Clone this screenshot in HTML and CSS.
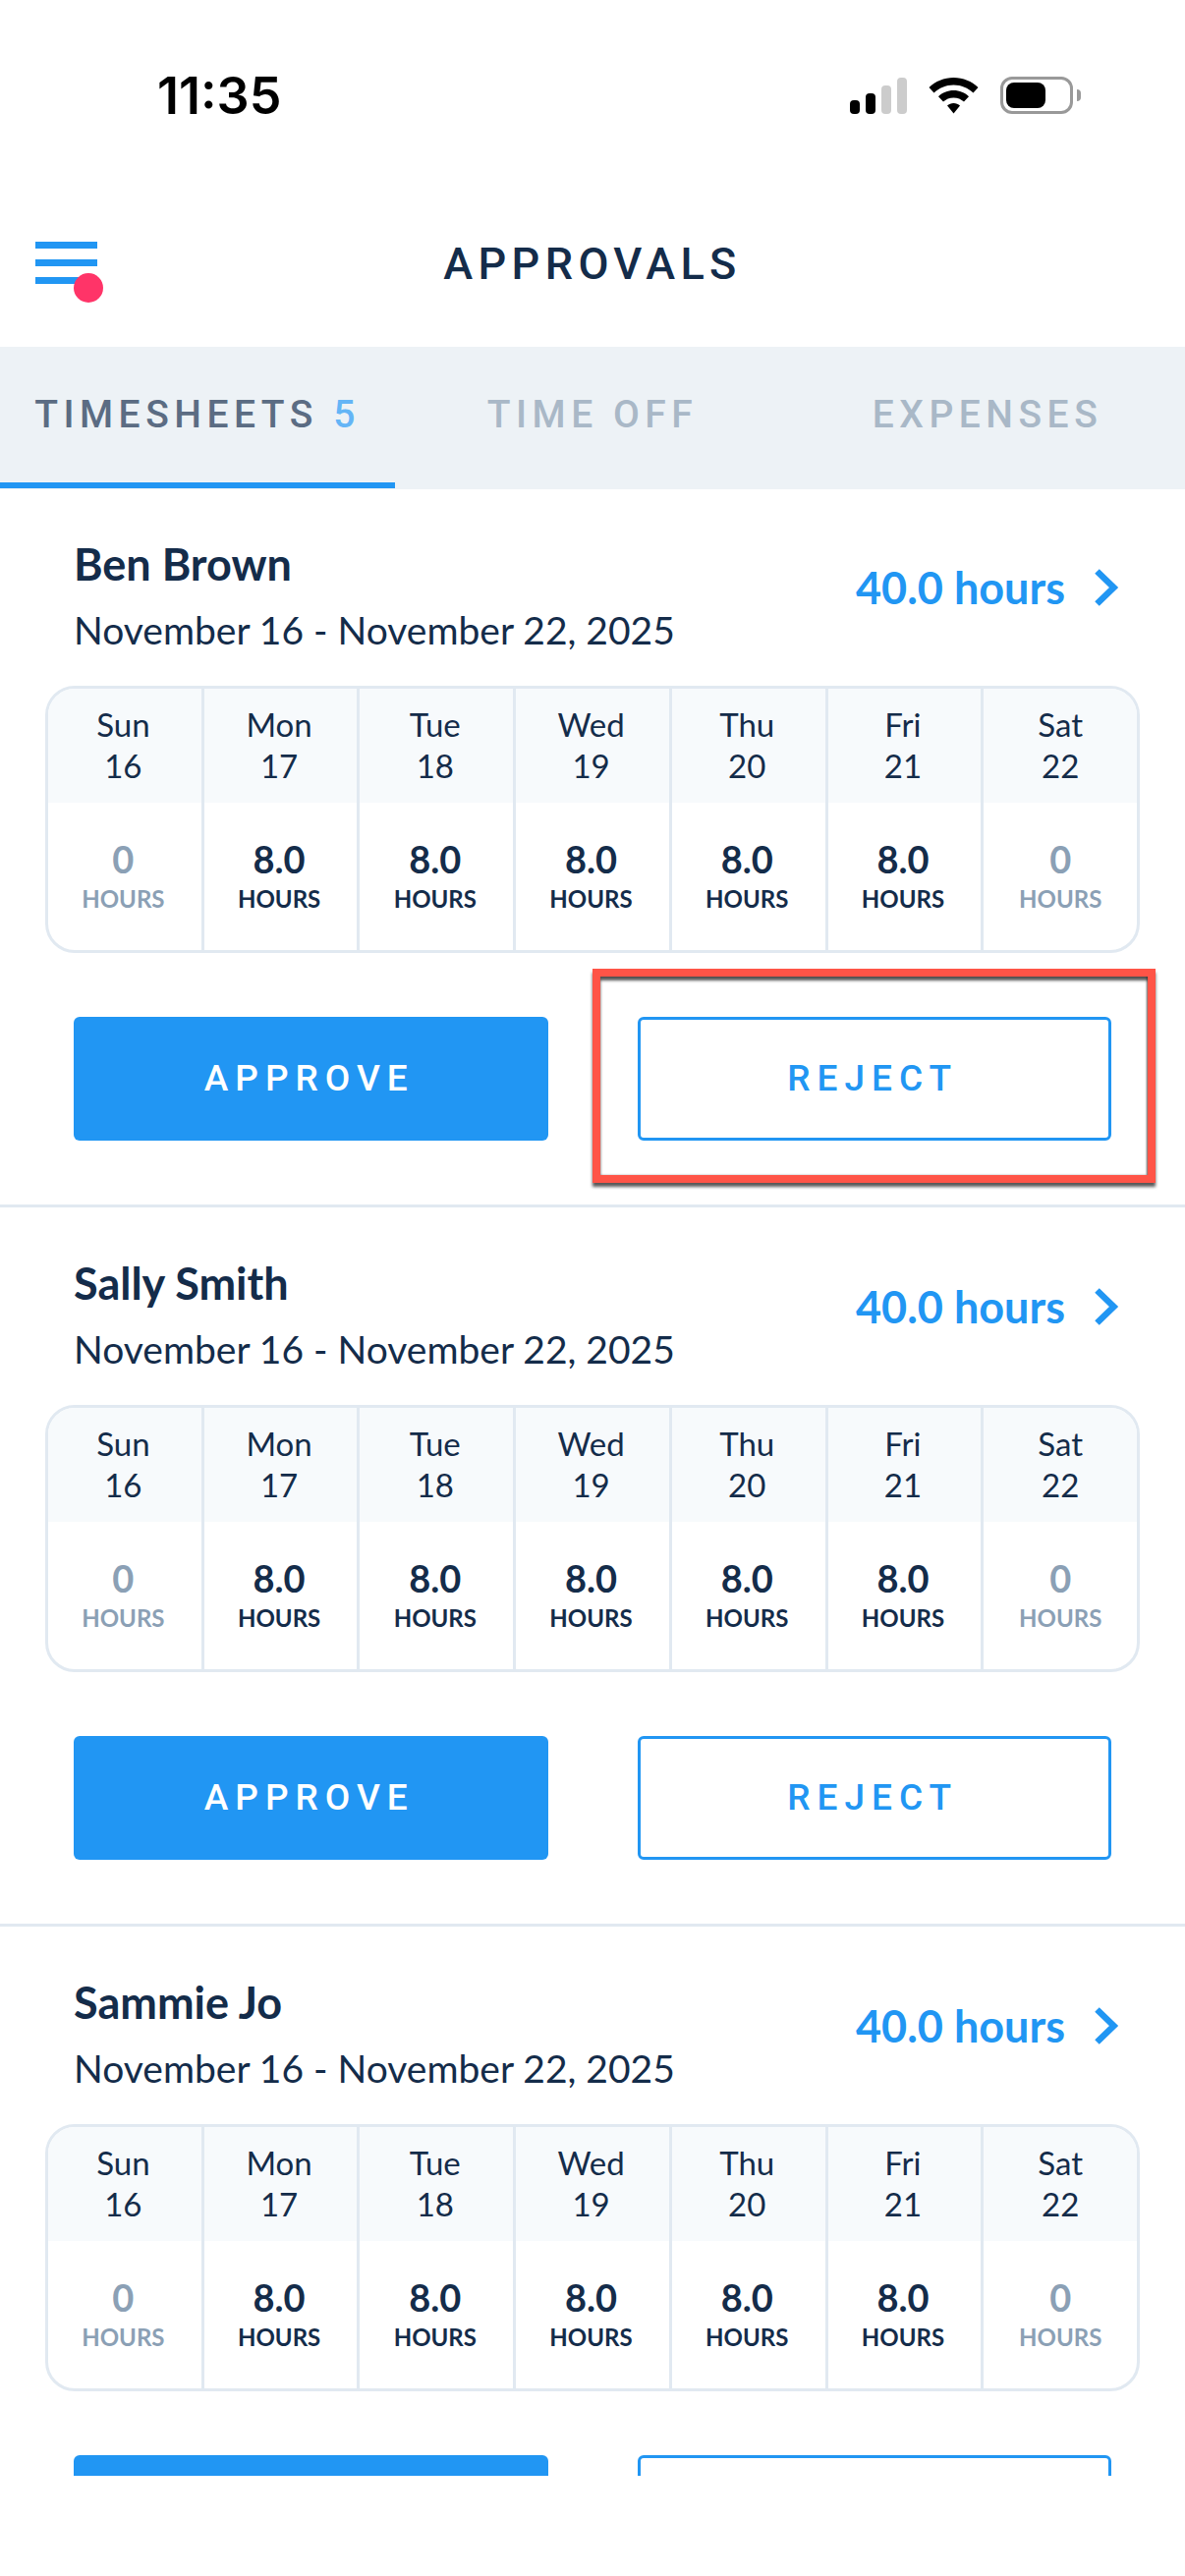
FILE: index.html
```html
<!DOCTYPE html>
<html lang="en">
    <head>
        <meta charset="utf-8">
        <title>Approvals</title>
        <link rel="stylesheet" href="styles.css">
    </head>
    <body>
        <div class="status">
            <span class="time">11:35</span>
            <div class="status-icons">
                <svg class="signal" width="58" height="37" viewBox="0 0 58 37">
                    <rect x="0" y="23" width="10" height="14" rx="4" fill="#000"/>
                    <rect x="16" y="16" width="10" height="21" rx="4" fill="#000"/>
                    <rect x="32" y="8" width="10" height="29" rx="4" fill="#ccc"/>
                    <rect x="48" y="0" width="10" height="37" rx="4" fill="#ccc"/>
                </svg>
                <svg class="wifi" width="51" height="37" viewBox="0 0 51 37">
                    <path d="M25.5 0C15.8 0 7 3.700 0.500 10L5.500 15.500C10.700 10.500 17.700 7.500 25.500 7.500S40.300 10.500 45.500 15.500L50.500 10C44 3.700 35.200 0 25.500 0Z" fill="#000"/>
                    <path d="M25.500 13C19.500 13 14 15.300 10 19.200L15 24.500C17.700 22 21.400 20.400 25.500 20.400S33.300 22 36 24.500L41 19.200C37 15.300 31.500 13 25.500 13Z" fill="#000"/>
                    <path d="M25.500 26C23 26 20.700 27 19 28.600L25.500 36.500L32 28.600C30.300 27 28 26 25.500 26Z" fill="#000"/>
                </svg>
                <div class="battery">
                    <div class="battery-body"><div class="battery-fill"></div></div>
                    <div class="battery-nub"></div>
                </div>
            </div>
        </div>

        <div class="topbar">
            <div class="menu">
                <span class="menu-line"></span>
                <span class="menu-line"></span>
                <span class="menu-line"></span>
                <span class="menu-dot"></span>
            </div>
            <div class="title">APPROVALS</div>
        </div>

        <div class="tabs">
            <div class="tab active">TIMESHEETS <span class="count">5</span></div>
            <div class="tab">TIME OFF</div>
            <div class="tab">EXPENSES</div>
        </div>

        <div class="list">
            <div class="card">
                <div class="card-head">
                    <div>
                        <div class="name">Ben Brown</div>
                        <div class="dates">November 16 - November 22, 2025</div>
                    </div>
                    <div class="total">
                        <span>40.0 hours</span>
                        <svg width="28" height="38" viewBox="0 0 28 38"><path d="M4.500 2.500L21.500 19L4.500 35.500" fill="none" stroke="#2196f3" stroke-width="6.500"/></svg>
                    </div>
                </div>
                <div class="week">
                    <div class="day"><div class="day-top">Sun<br>16</div><div class="day-hours off"><b>0</b><span>HOURS</span></div></div>
                    <div class="day"><div class="day-top">Mon<br>17</div><div class="day-hours"><b>8.0</b><span>HOURS</span></div></div>
                    <div class="day"><div class="day-top">Tue<br>18</div><div class="day-hours"><b>8.0</b><span>HOURS</span></div></div>
                    <div class="day"><div class="day-top">Wed<br>19</div><div class="day-hours"><b>8.0</b><span>HOURS</span></div></div>
                    <div class="day"><div class="day-top">Thu<br>20</div><div class="day-hours"><b>8.0</b><span>HOURS</span></div></div>
                    <div class="day"><div class="day-top">Fri<br>21</div><div class="day-hours"><b>8.0</b><span>HOURS</span></div></div>
                    <div class="day"><div class="day-top">Sat<br>22</div><div class="day-hours off"><b>0</b><span>HOURS</span></div></div>
                </div>
                <div class="actions">
                    <div class="btn approve">APPROVE</div>
                    <div class="btn reject">REJECT</div>
                    <div class="callout"></div>
                </div>
            </div>

            <div class="card">
                <div class="card-head">
                    <div>
                        <div class="name">Sally Smith</div>
                        <div class="dates">November 16 - November 22, 2025</div>
                    </div>
                    <div class="total">
                        <span>40.0 hours</span>
                        <svg width="28" height="38" viewBox="0 0 28 38"><path d="M4.500 2.500L21.500 19L4.500 35.500" fill="none" stroke="#2196f3" stroke-width="6.500"/></svg>
                    </div>
                </div>
                <div class="week">
                    <div class="day"><div class="day-top">Sun<br>16</div><div class="day-hours off"><b>0</b><span>HOURS</span></div></div>
                    <div class="day"><div class="day-top">Mon<br>17</div><div class="day-hours"><b>8.0</b><span>HOURS</span></div></div>
                    <div class="day"><div class="day-top">Tue<br>18</div><div class="day-hours"><b>8.0</b><span>HOURS</span></div></div>
                    <div class="day"><div class="day-top">Wed<br>19</div><div class="day-hours"><b>8.0</b><span>HOURS</span></div></div>
                    <div class="day"><div class="day-top">Thu<br>20</div><div class="day-hours"><b>8.0</b><span>HOURS</span></div></div>
                    <div class="day"><div class="day-top">Fri<br>21</div><div class="day-hours"><b>8.0</b><span>HOURS</span></div></div>
                    <div class="day"><div class="day-top">Sat<br>22</div><div class="day-hours off"><b>0</b><span>HOURS</span></div></div>
                </div>
                <div class="actions">
                    <div class="btn approve">APPROVE</div>
                    <div class="btn reject">REJECT</div>
                </div>
            </div>

            <div class="card">
                <div class="card-head">
                    <div>
                        <div class="name">Sammie Jo</div>
                        <div class="dates">November 16 - November 22, 2025</div>
                    </div>
                    <div class="total">
                        <span>40.0 hours</span>
                        <svg width="28" height="38" viewBox="0 0 28 38"><path d="M4.500 2.500L21.500 19L4.500 35.500" fill="none" stroke="#2196f3" stroke-width="6.500"/></svg>
                    </div>
                </div>
                <div class="week">
                    <div class="day"><div class="day-top">Sun<br>16</div><div class="day-hours off"><b>0</b><span>HOURS</span></div></div>
                    <div class="day"><div class="day-top">Mon<br>17</div><div class="day-hours"><b>8.0</b><span>HOURS</span></div></div>
                    <div class="day"><div class="day-top">Tue<br>18</div><div class="day-hours"><b>8.0</b><span>HOURS</span></div></div>
                    <div class="day"><div class="day-top">Wed<br>19</div><div class="day-hours"><b>8.0</b><span>HOURS</span></div></div>
                    <div class="day"><div class="day-top">Thu<br>20</div><div class="day-hours"><b>8.0</b><span>HOURS</span></div></div>
                    <div class="day"><div class="day-top">Fri<br>21</div><div class="day-hours"><b>8.0</b><span>HOURS</span></div></div>
                    <div class="day"><div class="day-top">Sat<br>22</div><div class="day-hours off"><b>0</b><span>HOURS</span></div></div>
                </div>
                <div class="actions">
                    <div class="btn approve"></div>
                    <div class="btn reject"></div>
                </div>
            </div>
        </div>
    </body>
</html>
```

FILE: styles.css
```css
* {
    margin: 0;
    padding: 0;
    box-sizing: border-box;
}

body {
    width: 1206px;
    height: 2622px;
    background: #fff;
    overflow: hidden;
    font-family: "Lato", "Noto Sans", sans-serif;
    color: #142c4a;
}

/* status bar */
.status {
    height: 145px;
    padding: 68px 106px 0 160px;
    display: flex;
    justify-content: space-between;
    align-items: flex-start;
}

.time {
    font-family: "Inter", sans-serif;
    font-weight: 600;
    font-size: 52px;
    line-height: 60px;
    color: #000;
}

.status-icons {
    display: flex;
    align-items: flex-start;
    margin-top: 11px;
}

.wifi {
    margin-left: 22px;
}

.battery {
    display: flex;
    align-items: center;
    margin-left: 22px;
    margin-top: -1px;
}

.battery-body {
    width: 74px;
    height: 38px;
    border: 3px solid #999;
    border-radius: 12px;
    padding: 3px;
}

.battery-fill {
    width: 40px;
    height: 100%;
    background: #000;
    border-radius: 8px;
}

.battery-nub {
    width: 4px;
    height: 12px;
    margin-left: 4px;
    background: #999;
    border-radius: 0 6px 6px 0;
}

/* header */
.topbar {
    height: 208px;
    display: flex;
    align-items: center;
    justify-content: center;
    position: relative;
}

.menu {
    position: absolute;
    left: 36px;
    top: 101px;
    width: 63px;
    display: flex;
    flex-direction: column;
    gap: 11px;
}

.menu-line {
    height: 7px;
    background: #2196f3;
}

.menu-dot {
    position: absolute;
    left: 39px;
    top: 32px;
    width: 30px;
    height: 30px;
    border-radius: 50%;
    background: #ff3468;
}

.title {
    font-family: "Roboto", sans-serif;
    font-weight: 500;
    font-size: 45px;
    letter-spacing: 5.400px;
    color: #142c4a;
    margin-top: 38px;
}

/* tabs */
.tabs {
    height: 145px;
    background: #edf2f6;
    display: flex;
}

.tab {
    flex: 1;
    height: 144px;
    text-align: center;
    padding-top: 46px;
    font-family: "Roboto", sans-serif;
    font-weight: 500;
    font-size: 39px;
    line-height: 46px;
    letter-spacing: 5.500px;
    color: #a9b8c7;
}

.tab.active {
    color: #5b6c83;
    border-bottom: 6px solid #2196f3;
}

.count {
    color: #64b5f6;
}

/* cards */
.list {
    height: 2022px;
    overflow: hidden;
}

.card {
    padding-top: 40px;
    padding-bottom: 65px;
    margin-bottom: 1px;
    border-bottom: 3px solid #e1e9f1;
}

.card-head {
    display: flex;
    justify-content: space-between;
    padding: 0 66px 0 75px;
    height: 160px;
}

.name {
    font-weight: 700;
    font-size: 45px;
    line-height: 72px;
}

.dates {
    font-size: 39px;
    line-height: 62px;
}

.total {
    display: flex;
    align-items: center;
    gap: 28px;
    height: 48px;
    margin-top: 36px;
    font-weight: 700;
    font-size: 45px;
    color: #2196f3;
}

.week {
    margin: 0 46px;
    height: 272px;
    border: 3px solid #e1e9f1;
    border-radius: 30px;
    overflow: hidden;
    display: flex;
}

.day {
    flex: 1;
    text-align: center;
    border-right: 3px solid #e1e9f1;
}

.day:last-child {
    border-right: 0;
}

.day-top {
    height: 116px;
    background: #f7fafc;
    padding: 15px 3px 0 0;
    font-size: 33px;
    line-height: 42px;
}

.day-hours {
    display: flex;
    flex-direction: column;
    padding: 34px 3px 0 0;
}

.day:last-child .day-top,
.day:last-child .day-hours {
    padding-right: 0;
}

.day-hours b {
    font-size: 38px;
    line-height: 46px;
}

.day-hours span {
    font-size: 24px;
    line-height: 36px;
    font-weight: 700;
}

.off {
    color: #8ba0b5;
}

.actions {
    margin-top: 65px;
    padding: 0 75px;
    display: flex;
    gap: 91px;
    position: relative;
}

.btn {
    flex: 0 0 482.500px;
    height: 126px;
    padding: 0 3px 2px 0;
    border-radius: 6px;
    display: flex;
    align-items: center;
    justify-content: center;
    font-family: "Roboto", sans-serif;
    font-weight: 500;
    font-size: 37px;
    letter-spacing: 7px;
}

.approve {
    background: #2196f3;
    color: #fff;
}

.reject {
    border: 3px solid #2196f3;
    color: #2196f3;
}

/* red box drawn over the reject button */
.callout {
    position: absolute;
    left: 603px;
    top: -49px;
    width: 573px;
    height: 218px;
    border: 8px solid #ff5447;
    box-shadow: 0 4px 3px rgba(0, 0, 0, .65), inset 0 4px 3px rgba(0, 0, 0, .65), inset -1px 0 2px rgba(0, 0, 0, .4);
}
```
